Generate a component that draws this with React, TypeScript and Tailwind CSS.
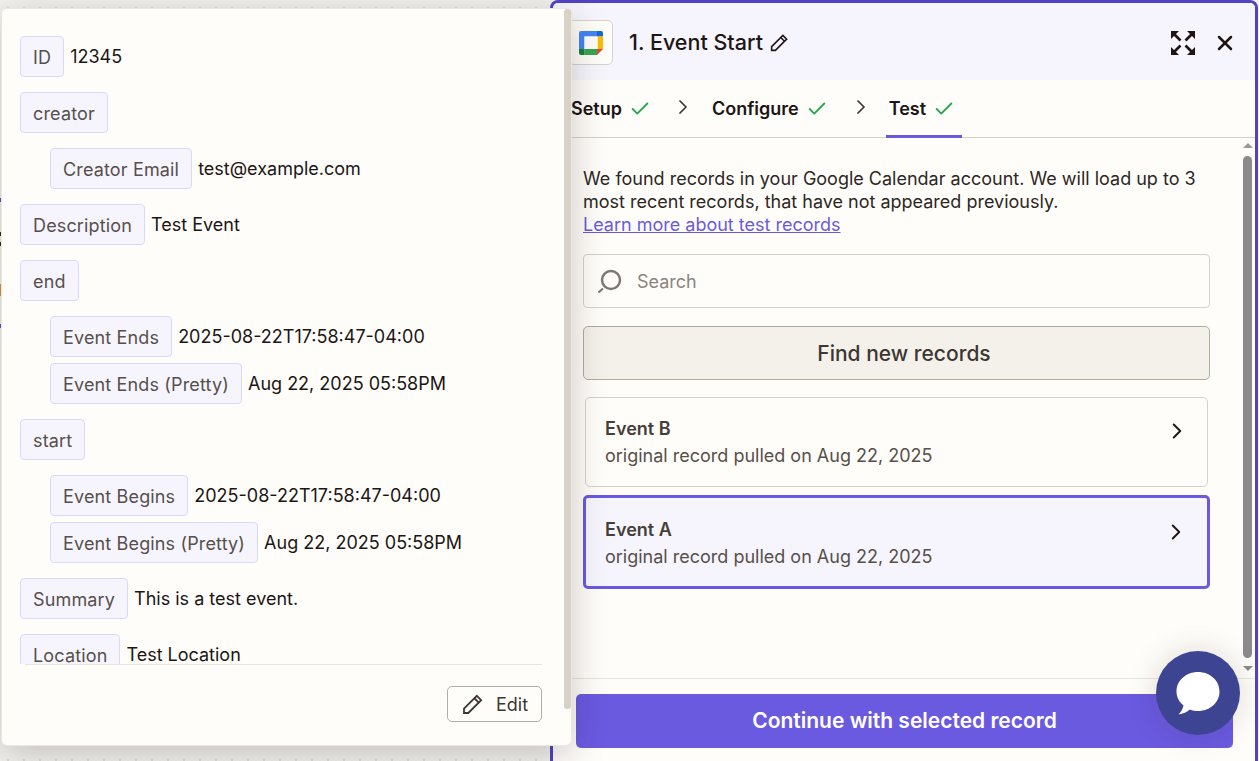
import { Check, ChevronRight, X } from "lucide-react";

const font = "font-['Inter','Liberation_Sans',sans-serif]";

function Tag({ children }: { children: string }) {
  return (
    <span className="inline-flex h-[41px] shrink-0 items-center rounded-[4px] border border-[#d9d9ff] bg-[#f6f5fe] px-3 pt-[1px] text-[18px] tracking-[0.15px] text-[#574f4b]">
      {children}
    </span>
  );
}

function Row({ label, value, child, gap }: { label: string; value?: string; child?: boolean; gap?: string }) {
  return (
    <div className={`flex items-start ${child ? "pl-[30px]" : ""} ${gap ?? "mb-[15px]"}`}>
      <Tag>{label}</Tag>
      {value && <span className="ml-[6px] pt-[9px] text-[18px] leading-[24px] text-[#201515]">{value}</span>}
    </div>
  );
}

function Pencil({ className }: { className: string }) {
  return (
    <svg viewBox="0 0 20 20" fill="none" stroke="currentColor" strokeWidth="1.5" className={className}>
      <path d="M2.5 17.500v-3.600L13.200 3.200l3.600 3.600L6.100 17.500H2.500Z" />
      <path d="M11.200 5.200l3.600 3.600" />
    </svg>
  );
}

function ExpandIcon() {
  return (
    <svg viewBox="0 0 24 24" className="h-6 w-6 text-[#201515]" fill="currentColor" stroke="currentColor">
      <path d="M0 0h8L0 8V0Z" strokeWidth="0" />
      <path d="M2 2l7.500 7.500" strokeWidth="2.600" />
      <path d="M24 0h-8l8 8V0Z" strokeWidth="0" />
      <path d="M22 2l-7.500 7.500" strokeWidth="2.600" />
      <path d="M0 24h8l-8-8v8Z" strokeWidth="0" />
      <path d="M2 22l7.500-7.500" strokeWidth="2.600" />
      <path d="M24 24h-8l8-8v8Z" strokeWidth="0" />
      <path d="M22 22l-7.500-7.500" strokeWidth="2.600" />
    </svg>
  );
}

function CalendarLogo() {
  return (
    <svg viewBox="0 0 24 24" className="h-6 w-6">
      <path d="M2 0h16v5.500H5.500V18H0V2a2 2 0 0 1 2-2Z" fill="#4285f4" />
      <path d="M18 0h4a2 2 0 0 1 2 2v3.500h-6V0Z" fill="#1967d2" />
      <path d="M18.500 5.500H24V18h-5.500V5.500Z" fill="#fbbc04" />
      <path d="M5.500 18H18v6H5.500V18Z" fill="#34a853" />
      <path d="M0 18h5.500v6H2a2 2 0 0 1-2-2v-4Z" fill="#188038" />
      <path d="M18 18h6l-6 6v-6Z" fill="#ea4335" />
      <path d="M5.500 5.500H18.500V18H5.500Z" fill="#fffdf9" />
    </svg>
  );
}

function Step({ label, active }: { label: string; active?: boolean }) {
  return (
    <div className={`flex h-[58px] items-center gap-[7px] border-b-[3px] pt-[3px] ${active ? "border-[#6a5ae0] pl-[3px] pr-[7px]" : "border-transparent"}`}>
      <span className="text-[18px] font-semibold leading-none text-[#201515]">{label}</span>
      <Check className="h-[22px] w-[22px] text-[#25a84a]" strokeWidth={2} />
    </div>
  );
}

function RecordCard({ name, selected }: { name: string; selected?: boolean }) {
  return (
    <div
      className={`flex items-start justify-between rounded-[5px] ${
        selected ? "h-[94px] border-[3px] border-[#6a5ae0] bg-[#f6f5fd] pl-[19px] pr-[18px] pt-[20px]" : "mx-[2px] mb-[8px] h-[90px] border border-[#d6d2c8] pl-[19px] pr-[17px] pt-[19px]"
      }`}
    >
      <div>
        <div className="text-[18px] font-semibold leading-[24px] text-[#453e3a]">{name}</div>
        <div className="mt-[3px] text-[18px] leading-[24px] text-[#574f4b]">original record pulled on Aug 22, 2025</div>
      </div>
      <ChevronRight className="mt-[1px] h-[26px] w-[26px] text-[#201515]" strokeWidth={1.75} />
    </div>
  );
}

function DetailPopover() {
  return (
    <div className="absolute left-[2px] top-[9px] z-20 flex h-[736px] w-[569px] flex-col rounded-[5px] bg-[#fffdf9] shadow-[0_8px_36px_rgba(32,21,21,0.24)] ring-1 ring-[#ebe8e0]">
      <div className="h-[655px] overflow-hidden pl-[18px] pt-[27px]">
        <Row label="ID" value="12345" />
        <Row label="creator" />
        <Row label="Creator Email" value="test@example.com" child />
        <Row label="Description" value="Test Event" />
        <Row label="end" />
        <Row label="Event Ends" value="2025-08-22T17:58:47-04:00" child gap="mb-[6px]" />
        <Row label="Event Ends (Pretty)" value="Aug 22, 2025 05:58PM" child />
        <Row label="start" />
        <Row label="Event Begins" value="2025-08-22T17:58:47-04:00" child gap="mb-[6px]" />
        <Row label="Event Begins (Pretty)" value="Aug 22, 2025 05:58PM" child />
        <Row label="Summary" value="This is a test event." />
        <Row label="Location" value="Test Location" />
      </div>
      <div className="mx-[23px] mr-[29px] border-t border-[#e8e5dc]">
        <div className="flex justify-end pt-[21px]">
          <button className="flex h-[36px] w-[95px] items-center justify-center gap-[11px] rounded-[5px] border border-[#b0aca4] text-[18px] text-[#3d3633]">
            <Pencil className="h-[24px] w-[24px] text-[#3d3633]" />
            Edit
          </button>
        </div>
      </div>
      {/* popover scrollbar */}
      <div className="absolute right-0 top-0 h-[700px] w-[7px] rounded-[3px] bg-[#d6d2c6]" />
    </div>
  );
}

function StepPanel() {
  return (
    <div className="relative ml-[550px] flex h-[761px] w-[708px] flex-col rounded-t-[8px] border-[3px] border-b-0 border-[#5143c4] bg-[#fffdf9]">
      <div className="flex h-[77px] shrink-0 items-center justify-between rounded-t-[5px] bg-[#f6f5fd] pl-[16px] pr-[18px] pt-[2px]">
        <div className="flex items-center">
          <div className="flex h-[45px] w-[44px] items-center justify-center rounded-[5px] border border-[#d6d2c8] bg-[#fffdf9]">
            <CalendarLogo />
          </div>
          <span className="ml-[16px] text-[21.5px] font-medium leading-none text-[#201515]">1. Event Start</span>
          <Pencil className="ml-[6px] h-[21px] w-[21px] text-[#201515]" />
        </div>
        <div className="flex items-center gap-[18px]">
          <ExpandIcon />
          <X className="h-6 w-6 text-[#201515]" strokeWidth={2.5} />
        </div>
      </div>

      <div className="flex h-[58px] shrink-0 items-center border-b border-[#d6d2c8] pl-[18px]">
        <Step label="Setup" />
        <ChevronRight className="ml-[20px] mr-[17px] h-6 w-6 -translate-y-[2px] text-[#3d3633]" strokeWidth={1.75} />
        <Step label="Configure" />
        <ChevronRight className="ml-[21px] mr-[13px] h-6 w-6 -translate-y-[2px] text-[#3d3633]" strokeWidth={1.75} />
        <Step label="Test" active />
      </div>

      <div className="flex min-h-0 flex-1 overflow-hidden">
        <div className="min-w-0 flex-1 pl-[30px] pr-[28px] pt-[29px]">
          <p className="text-[18px] leading-[23px] text-[#2d2724]">
            We found records in your Google Calendar account. We will load up to 3 most recent records, that have not appeared previously.
          </p>
          <a className="block text-[18px] leading-[23px] text-[#6a5ae0] underline">Learn more about test records</a>
          <div className="mt-[18px] flex h-[54px] items-center rounded-[4px] border border-[#d6d2c8] pl-[14px]">
            <svg viewBox="0 0 26 26" fill="none" stroke="#7d7672" className="h-[26px] w-[26px]">
              <circle cx="13" cy="12" r="9" strokeWidth="2.400" />
              <path d="M0.500 24.500L5 20.500" strokeWidth="2" />
            </svg>
            <span className="ml-[13px] text-[18px] text-[#8b8480]">Search</span>
          </div>
          <button className="mt-[18px] h-[54px] w-full rounded-[5px] border border-[#b0aca4] bg-[#f4f1ea] pl-[15px] pt-[1px] text-[21px] font-medium text-[#3d3633]">
            Find new records
          </button>
          <div className="mt-[17px]">
            <RecordCard name="Event B" />
            <RecordCard name="Event A" selected />
          </div>
        </div>
        {/* content scrollbar */}
        <div className="flex w-[17px] shrink-0 flex-col items-center pl-[2px] pt-[5px]">
          <div className="h-0 w-0 border-x-[5px] border-b-[5px] border-x-transparent border-b-[#9a9a9a]" />
          <div className="mt-[8px] h-[502px] w-[9px] rounded-full bg-[#8b8b8b]" />
          <div className="mt-[8px] h-0 w-0 border-x-[5px] border-t-[5px] border-x-transparent border-t-[#8b8b8b]" />
        </div>
      </div>

      <div className="h-[83px] shrink-0 border-t border-[#e8e5dc] pl-[23px] pr-[22px] pt-[15px]">
        <button className="h-[54px] w-full rounded-[5px] bg-[#6a5ae0] text-[21px] font-semibold text-white">
          Continue with selected record
        </button>
      </div>
    </div>
  );
}

export default function App() {
  return (
    <div className={`relative h-[761px] w-[1259px] overflow-hidden bg-[#f3f2ee] bg-[radial-gradient(#e0ddd6_1px,transparent_1px)] bg-[length:16px_16px] ${font}`}>
      {/* bits of the canvas nodes peeking out behind the popover */}
      <div className="absolute left-0 top-[198px] h-[4px] w-[2px] bg-[#5b4fd0]" />
      <div className="absolute left-0 top-[232px] h-[4px] w-[2px] bg-[#3d2a20]" />
      <div className="absolute left-0 top-[242px] h-[4px] w-[2px] bg-[#3d2a20]" />
      <div className="absolute left-0 top-[284px] h-[12px] w-[2px] bg-[#e0913a]" />
      <div className="absolute left-0 top-[324px] h-[4px] w-[2px] bg-[#5b4fd0]" />
      <StepPanel />
      <DetailPopover />
      <button className="absolute left-[1156px] top-[651px] z-30 flex h-[84px] w-[84px] items-center justify-center rounded-full bg-[#3d4592] shadow-[0_0_30px_rgba(32,21,21,0.15)]">
        <svg viewBox="0 0 44 44" className="h-[44px] w-[44px]" fill="#ffffff">
          <path d="M22 1c12 0 21.500 8.500 21.500 19.500S34 40 22 40c-3 0-5.500-.5-8-1.500C11 41 7 43 2.500 43.500 5 41 7 37.500 7.500 34.500 3 31 .5 26 .5 20.500.5 9.500 10 1 22 1Z" />
        </svg>
      </button>
    </div>
  );
}
